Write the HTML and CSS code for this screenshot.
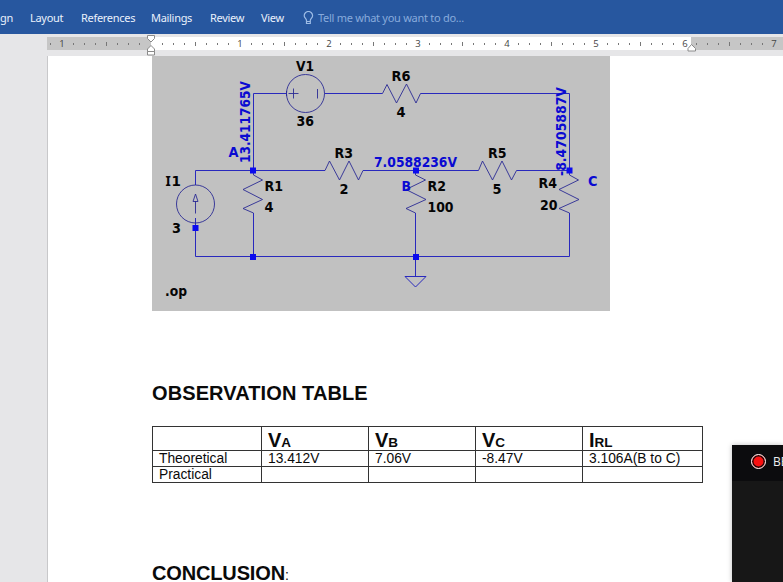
FILE: index.html
```html
<!DOCTYPE html>
<html lang="en">
<head>
<meta charset="utf-8">
<title>Document</title>
<link rel="stylesheet" href="styles.css">
</head>
<body>
<div class="app">
  <nav class="ribbon">
    <span>gn</span><span>Layout</span><span>References</span><span>Mailings</span><span>Review</span><span>View</span>
    <span class="tell">
      <svg class="bulb" width="11" height="15" viewBox="0 0 11 15"><path d="M3.5 9.5C3.5 7.8 1.2 7 1.2 4.7a4.2 4.2 0 0 1 8.4 0C9.600 7 7.300 7.800 7.300 9.500V12.500H3.500ZM3.500 10.500H7.300"/></svg>
      <span class="hint">Tell me what you want to do...</span>
    </span>
  </nav>
  <div class="ruler">
    <svg width="783" height="22" viewBox="0 34 783 22">
      <path fill="#c6c6c6" d="M47 37h104v13H47zM691 37h92v13h-92z"/>
      <path fill="#fff" d="M151 37h540v13H151z"/>
      <g id="ticks" class="ticks"></g>
      <g class="marker">
        <path d="M147.500 35.500h7v3l-3.500 3.500-3.500-3.500zM151 45.500l3.500 3.500v2.500h-7V49zM147.500 51.500h7v3.500h-7z"/>
        <path d="M691.500 44.500l4 4v2.500h-7.500v-2.500z"/>
      </g>
    </svg>
  </div>
  <main class="workspace">
    <article class="page">
      <svg class="circuit" width="458" height="255" viewBox="152 56 458 255">
        <g class="wire">
          <path d="M287 93.500H253.500V170.500M324.500 93.500H382.500M420.500 93.500H569.500V170.500M195.500 185V170.500H325M363 170.500H478.500M516.500 170.500H569.500M195.500 218V256.500H569.500V213M253.500 213V256.500M415.500 213V276M405 276.500H426L415.500 287Z"/>
        </g>
        <g class="part">
          <circle cx="305.500" cy="93.500" r="19"/>
          <circle cx="195.500" cy="204" r="19"/>
          <path d="M288.500 93.500h10M293.500 88.500v10M317.500 89v9.500M286.500 91v5"/>
          <path d="M195.500 194l2.500 7.500h-5zM195.500 201V213.500"/>
          <path d="M382.500 93.500L387 84.500 396.500 103 406.500 84 416 103 420.500 93.500"/>
          <path d="M325 170.500L329.500 161 339.500 180 349 161 358.500 180 363 170.500"/>
          <path d="M478.500 170.500L482.500 161 492.500 180 502 161 511.500 180 516.500 170.500"/>
          <path d="M253.500 170.500V175L262.500 180 243 189.500 262.500 199.500 243 208.500 253.500 213"/>
          <path d="M415.500 170.500V175L425.500 180 406 189.500 426 199.500 406 208.500 415.500 213"/>
          <path d="M569.500 170.500V175L578.500 180 559 189.500 579 199.500 559 208.500 569.500 213"/>
        </g>
        <path class="node" d="M250 167.500h6v6h-6zM413 167.500h6v6h-6zM566.500 167.500h6v6h-6zM192.500 225h6v6h-6zM250 254h6v6h-6zM413 254h6v6h-6z"/>
        <g class="label">
          <text x="296" y="71" textLength="18" lengthAdjust="spacingAndGlyphs">V1</text>
          <text x="296.500" y="126" textLength="17.500" lengthAdjust="spacingAndGlyphs">36</text>
          <text x="391.500" y="81" textLength="19" lengthAdjust="spacingAndGlyphs">R6</text>
          <text x="396.500" y="117" textLength="9" lengthAdjust="spacingAndGlyphs">4</text>
          <text x="334.500" y="158" textLength="18.500" lengthAdjust="spacingAndGlyphs">R3</text>
          <text x="339.500" y="193.500" textLength="9" lengthAdjust="spacingAndGlyphs">2</text>
          <text x="488" y="158" textLength="18.500" lengthAdjust="spacingAndGlyphs">R5</text>
          <text x="492.500" y="193.500" textLength="9" lengthAdjust="spacingAndGlyphs">5</text>
          <text x="165.500" y="186"><tspan class="serifed">I</tspan><tspan x="171.500">1</tspan></text>
          <text x="172" y="233" textLength="9" lengthAdjust="spacingAndGlyphs">3</text>
          <text x="264.500" y="190.500" textLength="18.500" lengthAdjust="spacingAndGlyphs">R1</text>
          <text x="264.500" y="211.500" textLength="9" lengthAdjust="spacingAndGlyphs">4</text>
          <text x="427.500" y="190.500" textLength="18.500" lengthAdjust="spacingAndGlyphs">R2</text>
          <text x="427.500" y="211.500" textLength="26" lengthAdjust="spacingAndGlyphs">100</text>
          <text x="538.500" y="188" textLength="18.500" lengthAdjust="spacingAndGlyphs">R4</text>
          <text x="540" y="210" textLength="17.500" lengthAdjust="spacingAndGlyphs">20</text>
          <text x="165" y="296" textLength="22" lengthAdjust="spacingAndGlyphs">.op</text>
        </g>
        <g class="label net">
          <text x="228.500" y="157" textLength="10" lengthAdjust="spacingAndGlyphs">A</text>
          <text x="401.500" y="190.500" textLength="9.500" lengthAdjust="spacingAndGlyphs">B</text>
          <text x="588" y="186" textLength="9.500" lengthAdjust="spacingAndGlyphs">C</text>
          <text x="374" y="167" textLength="83" lengthAdjust="spacingAndGlyphs">7.0588236V</text>
          <text transform="translate(249.500 163) rotate(-90)" textLength="82" lengthAdjust="spacingAndGlyphs">13.411765V</text>
          <text transform="translate(565.500 176) rotate(-90)" textLength="89" lengthAdjust="spacingAndGlyphs">-8.4705887V</text>
        </g>
      </svg>
      <h2 class="heading">OBSERVATION TABLE</h2>
      <table class="results">
        <colgroup><col class="c1"><col class="c2"><col class="c2"><col class="c2"><col class="c3"></colgroup>
        <tr class="head"><th></th><th>V<small>A</small></th><th>V<small>B</small></th><th>V<small>C</small></th><th>I<small>RL</small></th></tr>
        <tr><td>Theoretical</td><td>13.412V</td><td>7.06V</td><td>-8.47V</td><td>3.106A(B to C)</td></tr>
        <tr><td>Practical</td><td></td><td></td><td></td><td></td></tr>
      </table>
      <h2 class="heading conclusion">CONCLUSION<span>:</span></h2>
    </article>
  </main>
  <aside class="recorder"><i class="dot"></i><span>BE</span></aside>
</div>
<script src="ruler.js"></script>
</body>
</html>
```
FILE: styles.css
```css
* { box-sizing: border-box; }
body { margin: 0; background: #e6e6e8; overflow: hidden; }
.app { position: relative; width: 783px; height: 582px; overflow: hidden; display: flex; flex-direction: column; }
.ribbon {
  flex: none; height: 34px; background: #27579f; color: #eaf1fc;
  display: grid; grid-template-columns: 30px 51px 70px 59px 51px 42px 1fr;
  align-items: center; padding-top: 2px;
  font: 11px/16px "Noto Sans", "Open Sans", sans-serif; white-space: nowrap; letter-spacing: -0.3px;
}
.tell { display: flex; align-items: center; color: #87abdc; }
.hint { margin-left: 4px; letter-spacing: -0.27px; }
.bulb { fill: none; stroke: #9dbce6; stroke-width: 1.2; }
.ruler { flex: none; height: 22px; }
.ruler svg { display: block; }
.ticks text { font: 9.5px "Open Sans", sans-serif; fill: #444; text-anchor: middle; }
.ticks path { stroke: #777; stroke-width: 1; }
.marker path { fill: #fff; stroke: #8a8a8a; stroke-width: 1; }
.workspace { flex: 1; padding-left: 47px; min-height: 0; }
.page { height: 526px; border-left: 1px solid #c8c8ca; background: #fff; padding-left: 104px; font-family: "Liberation Sans", Arial, sans-serif; color: #0a0a0a; }
.circuit { display: block; background: #c1c1c1; }
.wire, .part { fill: none; stroke: #2929bd; stroke-width: 1; }
.part { stroke: #2a2a94; stroke-width: .9; }
.node { fill: #0b0bee; }
.label { font: bold 13.5px "DejaVu Sans", sans-serif; fill: #050505; }
.serifed { font-family: "Noto Sans", sans-serif; }
.net { fill: #0a0ad2; }
.heading { margin: 71px 0 0; font-size: 20px; line-height: 22px; font-weight: bold; white-space: nowrap; letter-spacing: 0.1px; }
.conclusion { margin-top: 79px; letter-spacing: -0.15px; }
.conclusion span { font-size: 14px; font-weight: normal; }
.results { margin-top: 22px; width: 551px; table-layout: fixed; border-collapse: collapse; font-size: 14px; line-height: 15px; }
.c1 { width: 109px; } .c2 { width: 107px; } .c3 { width: 120px; }
.results td, .results th { border: 1px solid #333; padding: 0 0 0 6px; height: 16px; text-align: left; white-space: nowrap; }
.results td { font-size: 13.8px; }
.results .head th { height: 24px; font-size: 20px; line-height: 20px; padding-top: 2px; }
.results small { font-size: 13.5px; line-height: 1; }
.recorder { position: absolute; left: 732px; top: 445px; width: 51px; height: 137px; background: linear-gradient(#0c0c0e 0 36px, #171717 36px); box-shadow: 0 0 5px rgba(0,0,0,.25); display: flex; align-items: flex-start; padding: 9px 0 0 19px; color: #eee; font: 12px/16px "Open Sans", sans-serif; }
.recorder span { margin-left: 7px; }
.dot { flex: none; width: 15px; height: 15px; border-radius: 50%; background: #f91010; border: 1.5px solid #fff; box-shadow: inset 0 0 0 1.500px #220808; }
```
FILE: ruler.js
```js
// Eighth-inch graduations measured from the left margin.
const origin = 151, inch = 89;
let out = "";
for (let i = -9; i <= 56; i++) {
  const x = origin + i * inch / 8;
  if (i === 0) continue;
  if (i % 8 === 0) {
    out += `<text x="${x}" y="47">${Math.abs(i / 8)}</text>`;
  } else {
    const long = i % 4 === 0;
    const px = Math.floor(x) + 0.5;
    out += `<path d="M${px} ${long ? 42 : 43}V${long ? 46 : 45}"/>`;
  }
}
document.getElementById("ticks").innerHTML = out;
```
